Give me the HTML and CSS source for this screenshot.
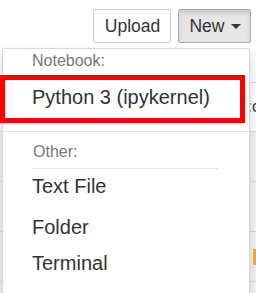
FILE: index.html
```html
<!doctype html>
<html>
	<head>
		<meta charset="utf-8">
		<title>Tree</title>
		<link rel="stylesheet" href="styles.css">
	</head>
	<body>
		<div id="page">
			<div class="toolbar">
				<button class="btn">Upload</button>
				<button class="btn btn-active">New <span class="caret"></span></button>
			</div>
			<div class="listing">
				<div class="row row-head"><span class="cell-text">:c</span></div>
				<div class="row"></div>
				<div class="row"></div>
				<div class="row"><span class="mark"></span></div>
				<div class="row"></div>
			</div>
			<ul class="dropdown">
				<li class="dd-header">Notebook:</li>
				<li class="dd-item highlight">Python 3 (ipykernel)</li>
				<li class="divider"></li>
				<li class="dd-header dd-header-line">Other:</li>
				<li class="dd-item item-text">Text File</li>
				<li class="dd-item item-folder">Folder</li>
				<li class="dd-item item-term">Terminal</li>
			</ul>
		</div>
	</body>
</html>
```

FILE: styles.css
```css
*{
	margin:0;
	padding:0;
	box-sizing:border-box;
}
body{
	background-color:#fff;
	font-family:"Liberation Sans", Arial, sans-serif;
	overflow:hidden;
}
#page{
	position:relative;
	width:256px;
	height:293px;
	overflow:hidden;
}
.toolbar{
	display:flex;
	justify-content:flex-end;
	gap:7px;
	height:48px;
	padding:9px 5px 0 0;
}
.btn{
	display:flex;
	align-items:center;
	justify-content:center;
	height:34px;
	border:1px solid #ccc;
	border-radius:2px;
	background-color:#fff;
	color:#333;
	font-family:"Liberation Sans", Arial, sans-serif;
	font-size:17.5px;
}
.btn:first-child{
	width:78px;
	padding-left:1px;
}
.btn-active{
	width:73px;
	gap:6px;
	padding-left:1px;
	background-color:#e6e6e6;
	border-color:#adadad;
	box-shadow:inset 0 3px 5px rgba(0,0,0,.125);
}
.caret{
	width:0;
	height:0;
	border-top:5px solid #333;
	border-left:5px solid transparent;
	border-right:5px solid transparent;
}
.listing{
	padding-top:34px;
}
.row{
	height:50px;
	border-top:1px solid #ddd;
	background-color:#f5f5f5;
	display:flex;
	justify-content:flex-end;
	align-items:center;
}
.row-head{
	height:49px;
	background-color:#fff;
}
.cell-text{
	font-size:16px;
	color:#333;
	margin-right:-4px;
}
.mark{
	width:3px;
	height:16px;
	background-color:#f0ad4e;
}
.dropdown{
	position:absolute;
	top:48px;
	left:2px;
	width:248px;
	height:260px;
	list-style:none;
	background-color:#fff;
	border:1px solid rgba(0,0,0,.15);
	box-shadow:0 6px 12px rgba(0,0,0,.175);
	border-radius:2px;
}
.dd-header{
	padding:2px 0 0 29px;
	line-height:19px;
	font-size:16px;
	color:#777;
}
.dd-header-line{
	width:186px;
	margin-left:29px;
	padding:10px 0 7px 1px;
	border-bottom:1px solid #e5e5e5;
}
.dd-item{
	padding-left:29px;
	font-size:20px;
	line-height:34px;
	color:#333;
	white-space:nowrap;
}
.highlight{
	width:245px;
	margin:5px 0 0 -3px;
	padding:0 0 4px 27px;
	border:5px solid #f00;
}
.divider{
	height:1px;
	margin-top:8px;
	background-color:#e5e5e5;
}
.item-folder{
	padding-top:5px;
	line-height:38px;
}
```
